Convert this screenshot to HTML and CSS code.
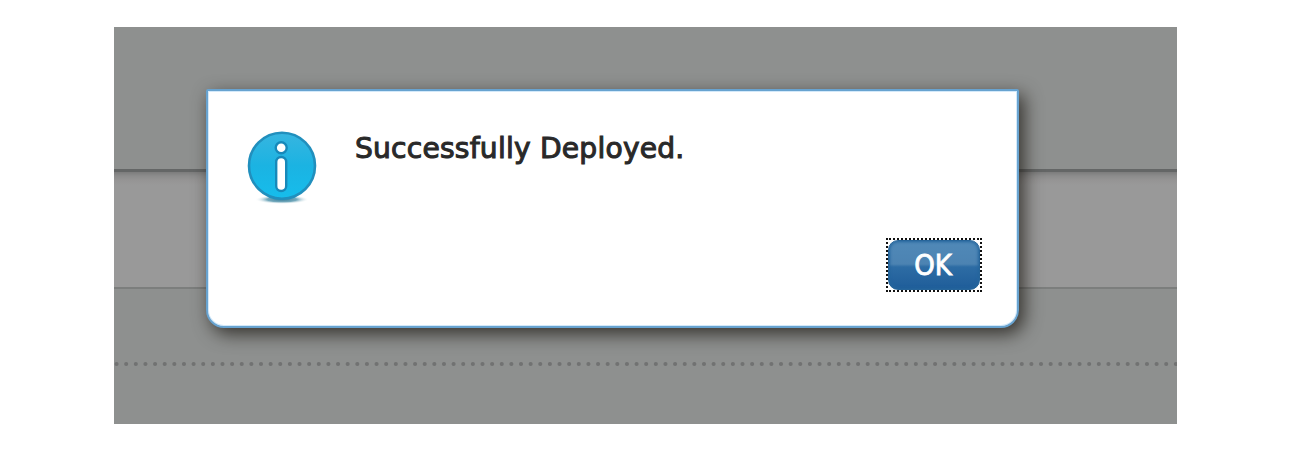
FILE: index.html
```html
<!DOCTYPE html>
<html lang="en">
<head>
<meta charset="utf-8">
<title>Deployment</title>
<link rel="stylesheet" href="styles.css">
</head>
<body>
<main class="page">
  <div class="row row-head"></div>
  <div class="row row-middle"></div>
  <div class="row row-lower"></div>
  <svg class="dots" width="1063" height="4" aria-hidden="true"><line x1="2.5" y1="2" x2="1063" y2="2" stroke="#717272" stroke-width="4" stroke-linecap="round" stroke-dasharray="0.1 9.53"/></svg>
  <section class="dialog" role="alertdialog" aria-labelledby="message">
    <div class="content">
      <svg class="icon" width="72" height="76" viewBox="0 0 72 76" aria-hidden="true">
        <defs>
          <linearGradient id="disc" x1="0" y1="0" x2="0" y2="1"><stop offset="0" stop-color="#37b5e0"/><stop offset=".5" stop-color="#1bb3e2"/><stop offset="1" stop-color="#16bdec"/></linearGradient>
          <radialGradient id="ground"><stop offset="0" stop-color="#397f9c"/><stop offset=".55" stop-color="#75aabd"/><stop offset="1" stop-color="#fff" stop-opacity="0"/></radialGradient>
        </defs>
        <ellipse cx="36" cy="69.5" rx="27" ry="4.5" fill="url(#ground)"/>
        <circle cx="36" cy="35.7" r="33" fill="url(#disc)" stroke="#218fbd" stroke-width="2.6"/>
        <circle cx="35.2" cy="17.7" r="5.5" fill="#fff" stroke="#1789ba" stroke-width="2.4"/>
        <rect x="30.2" y="27" width="10" height="34" rx="5" fill="#fff" stroke="#1789ba" stroke-width="2.4"/>
      </svg>
      <p class="message" id="message">Successfully Deployed.</p>
    </div>
    <div class="actions"><div class="focus"><button class="ok" type="button">OK</button></div></div>
  </section>
</main>
</body>
</html>
```
FILE: styles.css
```css
* { box-sizing: border-box; }
body { margin: 0; background: #fff; font-family: "DejaVu Sans Condensed", "DejaVu Sans", sans-serif; font-stretch: condensed; }
.page { position: relative; display: flex; flex-direction: column; width: 1063px; height: 397px; margin: 27px 0 0 114px; overflow: hidden; background: #8e908f; }
.row { width: 100%; }
.row-head { height: 145px; border-bottom: 3px solid #646666; }
.row-middle { height: 117px; border-bottom: 2px solid #7c7e7d; background: linear-gradient(#7c7c7c, #8c8c8c 4px, #959494 8px, #999 13px); }
.row-lower { height: 73px; }
.dots { display: block; flex: none; }
.dialog { position: absolute; left: 92px; top: 62px; width: 812.5px; height: 238.5px; padding: 39px 34.5px 0 38px; border: 2px solid #68a3d0; border-radius: 2px 2px 18px 18px; background: #fff; box-shadow: 5px 6px 18px rgba(20, 15, 10, .72), inset 0 0 0 1px #d3e9fa; }
.content { display: flex; height: 108px; }
.icon { flex: none; }
.message { margin: 0 0 0 37px; font-size: 29px; line-height: 37px; letter-spacing: .2px; color: #292929; -webkit-text-stroke: 1px #292929; white-space: nowrap; transform: scaleX(1.078); transform-origin: 0 0; }
.actions { display: flex; justify-content: flex-end; }
.focus { display: flex; width: 96px; height: 54px; border: 2px dotted #111; }
.ok { flex: 1; margin: 0; padding: 0 2px 0 0; border: 1px solid #27659a; border-radius: 10px; background: linear-gradient(#5089b8 0%, #4c83b2 48%, #2d6ca4 54%, #1f5d99 100%); box-shadow: inset 0 0 3px 1px #24659d; color: #fff; font: inherit; font-size: 29px; line-height: 46px; -webkit-text-stroke: .8px #fff; }
```
